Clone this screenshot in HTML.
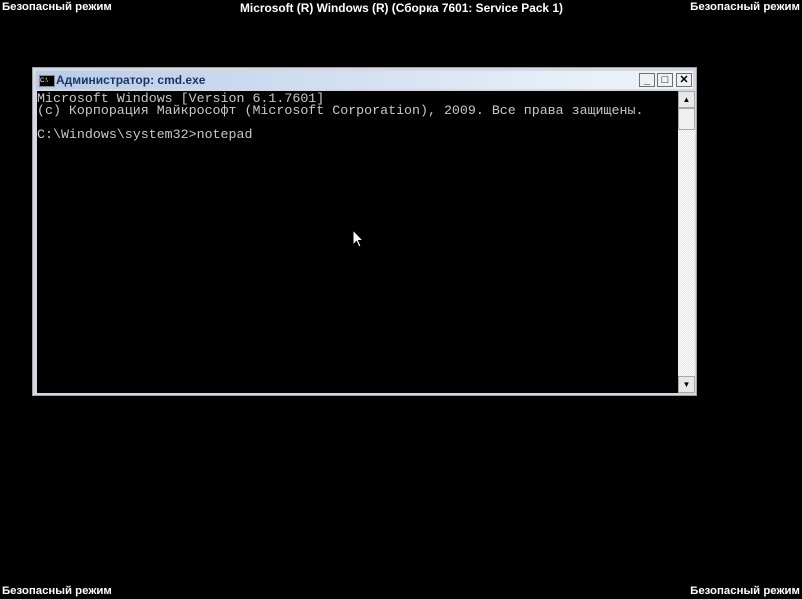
<!DOCTYPE html>
<html><head><meta charset="utf-8"><style>
body{margin:0;width:802px;height:599px;background:#000;position:relative;overflow:hidden;font-family:"Liberation Sans",sans-serif}
.sm{position:absolute;color:#fff;font-weight:bold;font-size:11.4px;white-space:nowrap}
.win{position:absolute;left:32px;top:67px;width:665px;height:329px;background:#d4d8e0;border:1px solid #a0a0a0;box-sizing:border-box}
.title{position:absolute;left:3px;top:3px;right:3px;height:18px;background:linear-gradient(90deg,#b8cce8,#e6eef8 80%,#f0f4fa)}
.title span{position:absolute;left:20px;top:2px;font-size:12px;font-weight:bold;color:#1e3466}
.ico{position:absolute;left:3px;top:4px;width:14px;height:10px;background:#000;border:1px solid #888;color:#fff;font-size:6px;line-height:10px}
.btn{position:absolute;top:2px;width:16px;height:14px;background:#eef0f4;border:1px solid #707070;box-sizing:border-box;font-size:11px;line-height:12px;text-align:center;color:#000;font-weight:bold}
.con{position:absolute;left:4px;top:23px;width:641px;height:302px;background:#000}
pre{margin:0;position:absolute;left:0;top:2px;color:#c8c8c8;font-family:"Liberation Mono",monospace;font-size:13.3px;line-height:12px}
.sb{position:absolute;left:645px;top:23px;width:17px;height:302px;background:repeating-conic-gradient(#fff 0 25%,#e4e4e4 0 50%) 0 0/2px 2px}
.sbb{position:absolute;left:0;width:17px;height:17px;background:#e8e8e8;border:1px solid #a8a8a8;box-sizing:border-box}
</style></head><body>
<div class="sm" style="left:2px;top:1px">Безопасный режим</div>
<div class="sm" style="left:240px;top:1px;font-size:11.9px">Microsoft (R) Windows (R) (Сборка 7601: Service Pack 1)</div>
<div class="sm" style="right:2px;top:1px">Безопасный режим</div>
<div class="sm" style="left:2px;top:585px">Безопасный режим</div>
<div class="sm" style="right:2px;top:585px">Безопасный режим</div>
<div class="win">
<div class="title"><div class="ico">C:\</div><span>Администратор: cmd.exe</span>
<div class="btn" style="right:38px">_</div><div class="btn" style="right:20px">□</div><div class="btn" style="right:1px">✕</div></div>
<div class="con"><pre>Microsoft Windows [Version 6.1.7601]
(c) Корпорация Майкрософт (Microsoft Corporation), 2009. Все права защищены.

C:\Windows\system32&gt;notepad</pre></div>
<div class="sb"><div class="sbb" style="top:0;font-size:8px;text-align:center;line-height:15px">▲</div>
<div class="sbb" style="top:17px;height:22px;background:#f0f0f0"></div>
<div class="sbb" style="bottom:0;font-size:8px;text-align:center;line-height:15px">▼</div></div>
</div>
<svg style="position:absolute;left:352px;top:229px" width="12" height="20" viewBox="0 0 12 20"><path d="M1 1V16L4.5 12.5L7 18L9 17L6.5 11.5H11Z" fill="#fff" stroke="#000"/></svg>
</body></html>
